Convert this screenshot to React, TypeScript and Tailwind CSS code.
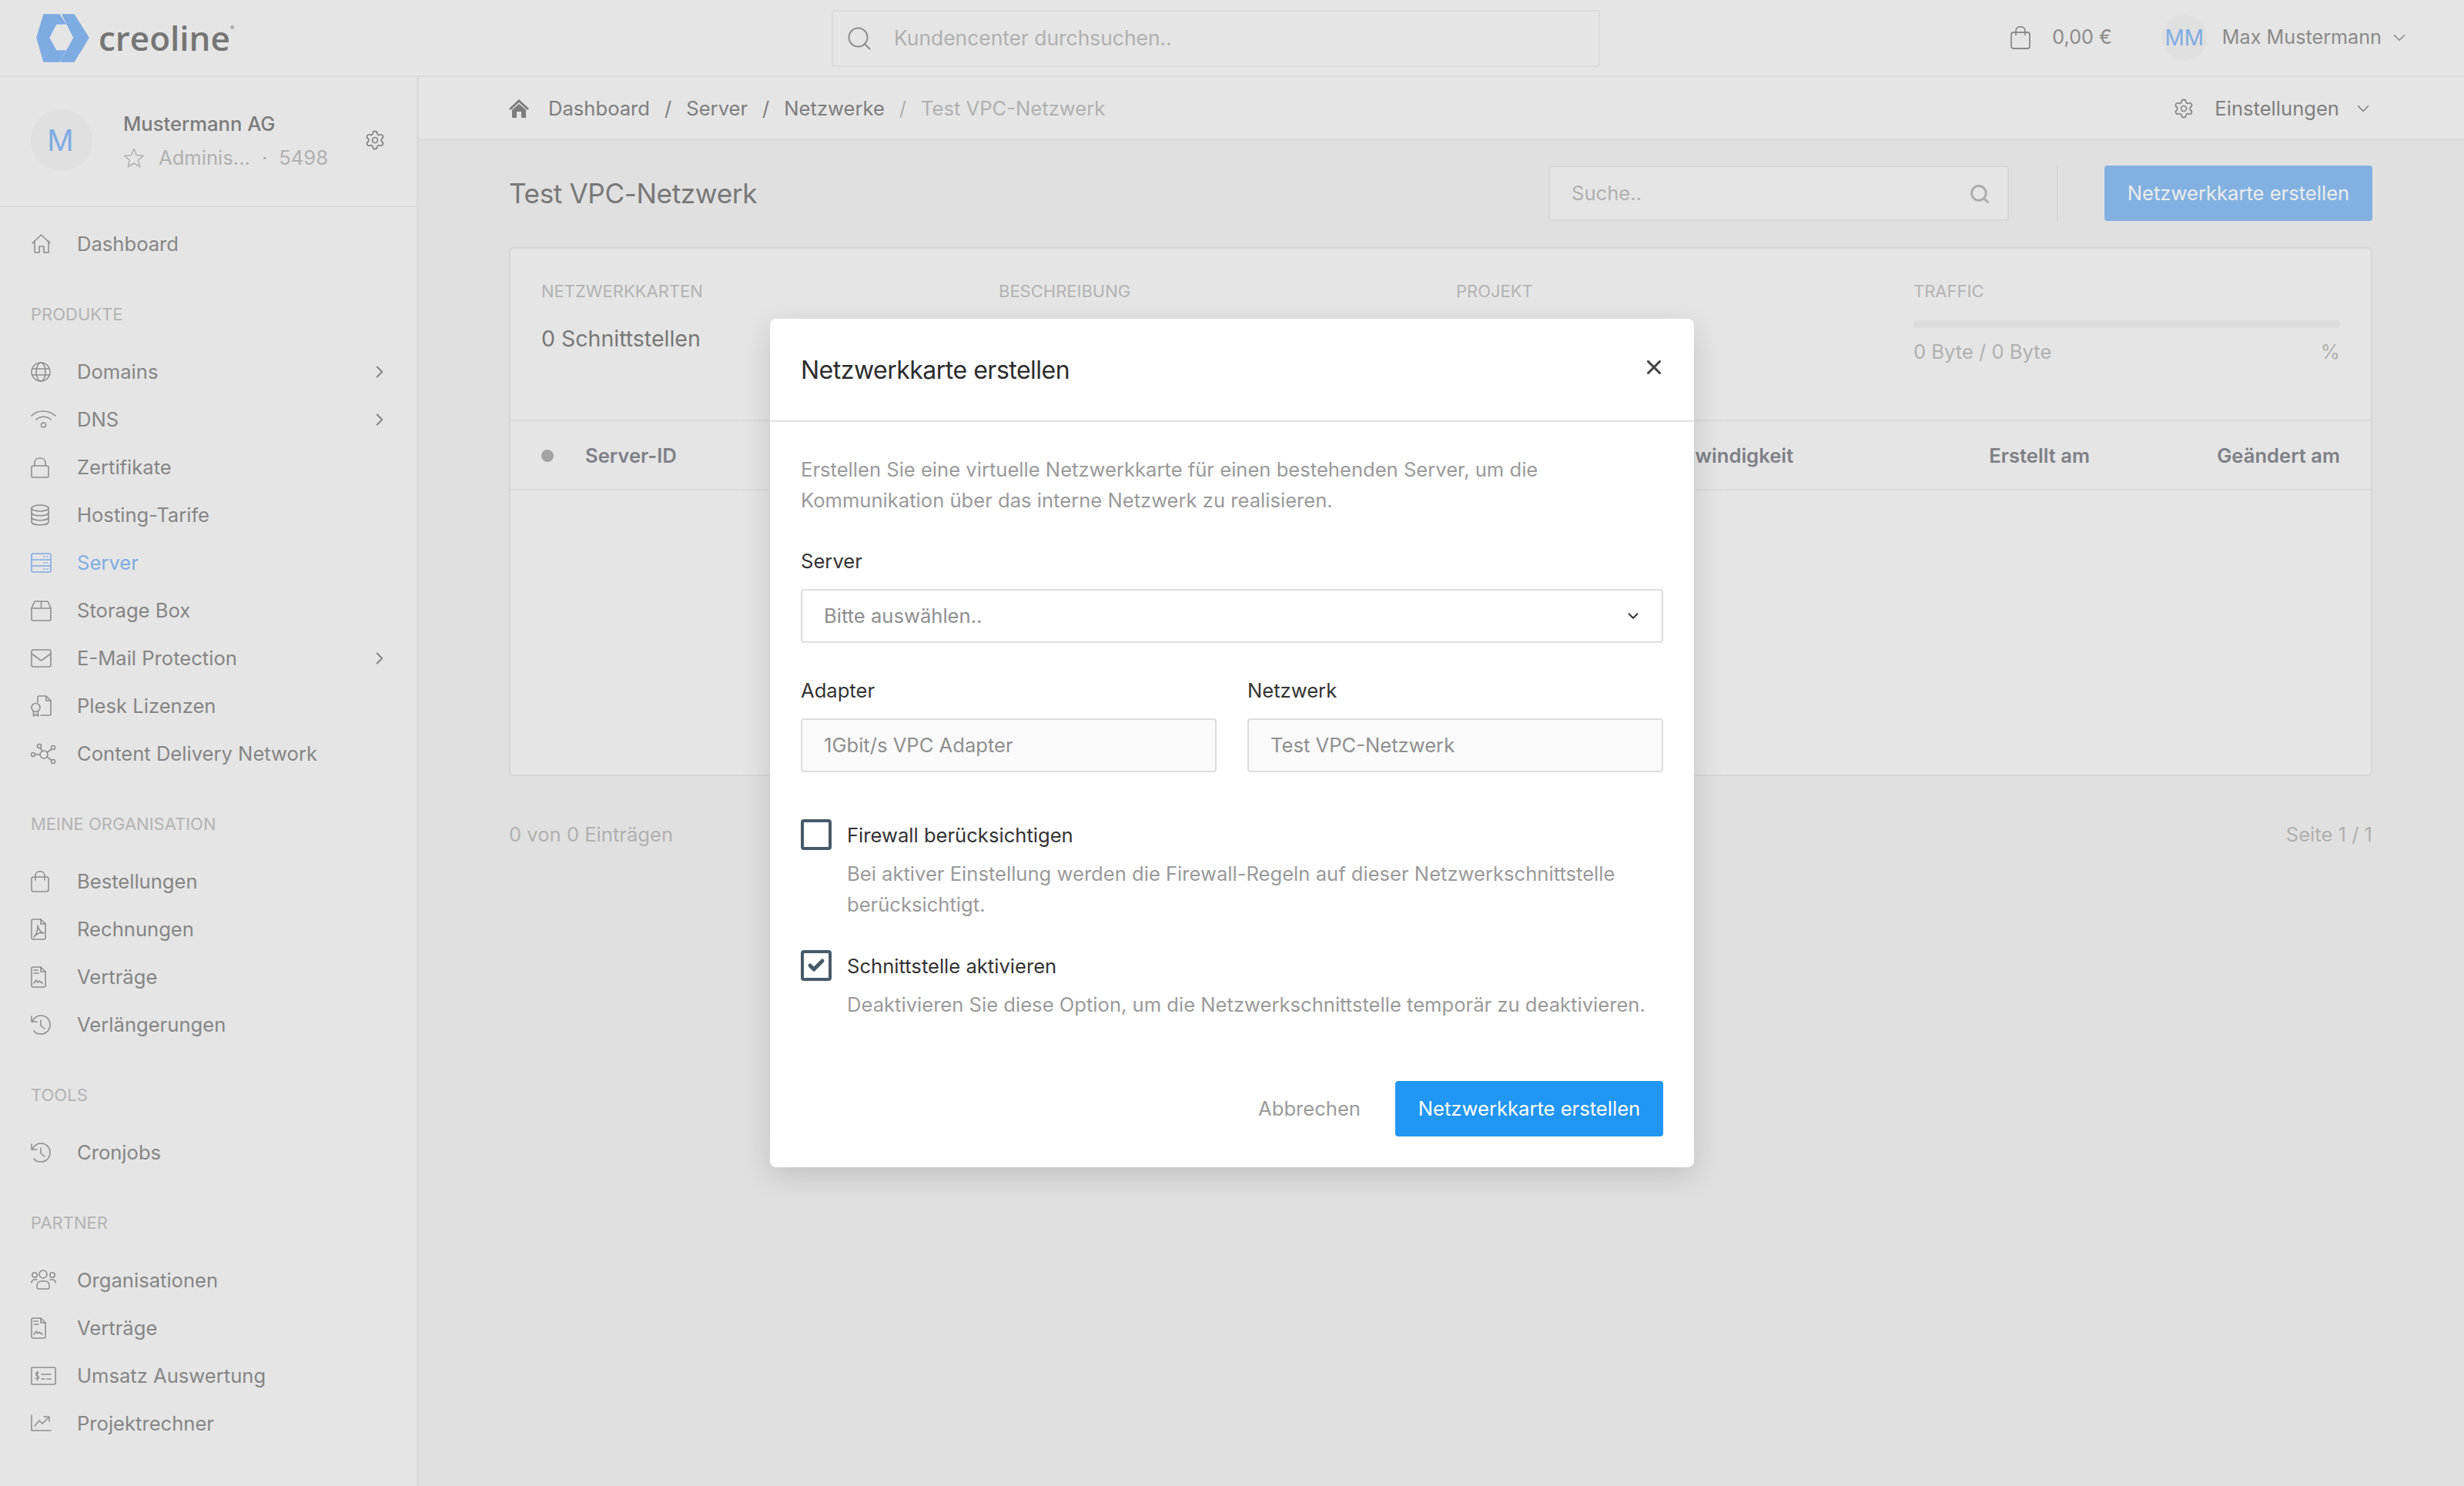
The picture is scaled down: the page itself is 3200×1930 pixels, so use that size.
import React from "react";
import { ChevronDown, ChevronRight, Search, Settings, X, Check } from "lucide-react";

type IconProps = { children: React.ReactNode };

// all sidebar icons share one box, drawn in full pixels
function NavIcon({ children }: IconProps) {
  return (
    <svg className="w-[34px] h-[28px] shrink-0" viewBox="0 0 34 28" fill="none" stroke="currentColor" strokeWidth={1.6} strokeLinecap="round" strokeLinejoin="round">
      {children}
    </svg>
  );
}

const icons: Record<string, React.ReactNode> = {
  home: (
    <>
      <path d="M2 13 L13.5 2 L25 13" />
      <path d="M5 10 V25 H11 V17 H17 V25 H23 V10" />
    </>
  ),
  globe: (
    <>
      <circle cx="13" cy="14" r="12" />
      <ellipse cx="13" cy="14" rx="6" ry="12" />
      <path d="M2 10 H24 M2 18 H24" />
    </>
  ),
  wifi: (
    <>
      <path d="M1 9 C9 1 23 1 32 9" />
      <path d="M7 14 C12 9 21 9 26 14" />
      <circle cx="16.5" cy="21" r="3" />
    </>
  ),
  lock: (
    <>
      <rect x="1" y="12" width="22" height="15" rx="2" />
      <path d="M5 12 V8 C5 0 19 0 19 8 V12" />
    </>
  ),
  database: (
    <>
      <ellipse cx="12" cy="5" rx="11" ry="4" />
      <path d="M1 5 V23 C1 28 23 28 23 23 V5" />
      <path d="M1 11 C1 16 23 16 23 11 M1 17 C1 22 23 22 23 17" />
    </>
  ),
  server: (
    <>
      <rect x="1" y="2" width="25" height="24" rx="2" />
      <path d="M1 10 H26 M1 18 H26" />
      <path d="M17 6 H18 M21 6 H22 M17 14 H18 M21 14 H22 M17 22 H18 M21 22 H22" />
    </>
  ),
  box: (
    <>
      <path d="M1 11 L5 2 H22 L26 11 V25 C26 26 25 27 24 27 H3 C2 27 1 26 1 25 Z" />
      <path d="M1 11 H26 M13.5 2 V11" />
    </>
  ),
  mail: (
    <>
      <rect x="1" y="3" width="25" height="22" rx="2" />
      <path d="M1 8 L13.5 17 L26 8" />
    </>
  ),
  plesk: (
    <>
      <path d="M9 9 V3 C9 2 10 1 11 1 H20 L26 7 V24 C26 25 25 26 24 26 H13" />
      <path d="M20 1 V7 H26" />
      <circle cx="6.5" cy="16" r="5.5" />
      <path d="M3.5 21 V27 L6.5 25 L9.5 27 V21" />
    </>
  ),
  network: (
    <>
      <circle cx="17" cy="15" r="5" />
      <circle cx="11" cy="4" r="2.5" />
      <circle cx="29" cy="6" r="2.5" />
      <circle cx="29" cy="24" r="2.5" />
      <circle cx="3" cy="15" r="2.5" />
      <path d="M12.5 6.5 L15 10.5 M27 8 L21 12 M27 22.5 L21 18 M6 15 H12" />
    </>
  ),
  bag: (
    <>
      <rect x="1" y="8" width="22" height="19" rx="2.5" />
      <path d="M6 12 V6 C6 -1 18 -1 18 6 V12" />
    </>
  ),
  pdf: (
    <>
      <path d="M1 3 C1 2 2 1 3 1 H13 L19 7 V25 C19 26 18 27 17 27 H3 C2 27 1 26 1 25 Z" />
      <path d="M13 1 V7 H19" />
      <path d="M9 9 C10 14 12 18 17 19 C12 18 7 20 4 24 C7 21 9 15 9 9" />
    </>
  ),
  contract: (
    <>
      <path d="M1 3 C1 2 2 1 3 1 H13 L19 7 V25 C19 26 18 27 17 27 H3 C2 27 1 26 1 25 Z" />
      <path d="M13 1 V7 H19 M4 5 H9 M4 9 H10" />
      <path d="M4 22 L7 18 L9 21 L11 19 L15 22" />
    </>
  ),
  history: (
    <>
      <path d="M1 3 V10 H8" />
      <path d="M2 10 C4 5 8 2 13 2 C20 2 25 7 25 14 C25 21 20 26 13 26 C9 26 6 25 4 22" />
      <path d="M13 8 V15 L18 19" />
    </>
  ),
  users: (
    <>
      <circle cx="16" cy="6" r="5" />
      <circle cx="5" cy="7" r="3.2" />
      <circle cx="28" cy="7" r="3.2" />
      <path d="M1 17 C1 14 3 13 5 13 H8 M32 17 C32 14 30 13 28 13 H25" />
      <path d="M8 21 C8 17 11 15 13 15 H19 C22 15 24 17 24 21 V23 C24 24 23 25 22 25 H10 C9 25 8 24 8 23 Z" />
    </>
  ),
  money: (
    <>
      <rect x="1" y="3" width="31" height="22" rx="1" />
      <path d="M14 12 H26 M14 18 H18 M21 18 H26" />
      <path d="M10 10 C7 9 6 11 7 12.5 C8 14 11 14 10.5 16.5 C10 18 8 18 6.5 17 M8.5 8 V20" strokeWidth={1.4} />
    </>
  ),
  chart: (
    <>
      <path d="M1 3 V23 H26" />
      <path d="M5 17 L11 10 L15 14 L23 6" />
      <path d="M17 5 H24 V11" />
    </>
  ),
};

type NavEntry = { icon: string; label: string; arrow?: boolean; active?: boolean };

const sections: { title: string; items: NavEntry[] }[] = [
  {
    title: "Produkte",
    items: [
      { icon: "globe", label: "Domains", arrow: true },
      { icon: "wifi", label: "DNS", arrow: true },
      { icon: "lock", label: "Zertifikate" },
      { icon: "database", label: "Hosting-Tarife" },
      { icon: "server", label: "Server", active: true },
      { icon: "box", label: "Storage Box" },
      { icon: "mail", label: "E-Mail Protection", arrow: true },
      { icon: "plesk", label: "Plesk Lizenzen" },
      { icon: "network", label: "Content Delivery Network" },
    ],
  },
  {
    title: "Meine Organisation",
    items: [
      { icon: "bag", label: "Bestellungen" },
      { icon: "pdf", label: "Rechnungen" },
      { icon: "contract", label: "Verträge" },
      { icon: "history", label: "Verlängerungen" },
    ],
  },
  { title: "Tools", items: [{ icon: "history", label: "Cronjobs" }] },
  {
    title: "Partner",
    items: [
      { icon: "users", label: "Organisationen" },
      { icon: "contract", label: "Verträge" },
      { icon: "money", label: "Umsatz Auswertung" },
      { icon: "chart", label: "Projektrechner" },
    ],
  },
];

function NavItem({ icon, label, arrow, active }: NavEntry) {
  return (
    <div className={`flex items-center h-[62px] pt-[2px] pl-[40px] pr-[40px] text-[25.6px] ${active ? "text-[#7fabe3]" : "text-[#858585]"}`}>
      <span className={`w-[60px] flex items-center ${active ? "" : "text-[#8f8f8f]"}`}>
        <NavIcon>{icons[icon]}</NavIcon>
      </span>
      <span className="flex-1">{label}</span>
      {arrow && <ChevronRight className="w-[26px] h-[26px] text-[#838383] mr-[-5px]" strokeWidth={1.8} />}
    </div>
  );
}

function Header() {
  return (
    <header className="h-[100px] shrink-0 flex items-center bg-[#e5e5e5] border-b-2 border-[#dbdbdb]">
      <div className="w-[1080px] shrink-0 flex items-center pl-[47px]">
        <svg className="w-[69px] h-[63px]" viewBox="0 0 69 63" fill="#7fabe3" stroke="#7fabe3" strokeWidth={1.5} strokeLinejoin="round">
          <polygon points="10,1 30,1 38,13 26,13 16.5,31 26,48 38,48 30,62 10,62 1,31" />
          <polygon points="34,1 49,1 68,31 49,62 32,62 49,31" />
        </svg>
        <span className="ml-[12px] font-[family-name:'Open_Sans',sans-serif] font-semibold text-[44px] leading-none text-[#757575]">
          creoline
        </span>
        <span className="text-[8px] text-[#757575] self-start mt-[12px]">®</span>
      </div>
      <div className="w-[998px] h-[74px] mt-[2px] flex items-center border-2 border-[#dbdbdb] rounded-[4px] pl-[16px] text-[26.4px] text-[#b0b0b0]">
        <Search className="w-[36px] h-[36px] text-[#8a8a8a]" strokeWidth={1.3} />
        <span className="ml-[27px]">Kundencenter durchsuchen..</span>
      </div>
      <div className="flex-1 flex items-center justify-end pr-[71px] text-[25.2px] text-[#8a8a8a]">
        <svg className="w-[28px] h-[32px]" viewBox="0 0 28 32" fill="none" stroke="currentColor" strokeWidth={1.8}>
          <rect x="2" y="9" width="24" height="21" rx="3" />
          <path d="M8 13 V7 C8 0 20 0 20 7 V13" />
        </svg>
        <span className="ml-[27px]">0,00 €</span>
        <span className="ml-[65px] w-[58px] h-[60px] rounded-full bg-[#e0e0e0] flex items-center justify-center text-[28px] text-[#7fabe3]">MM</span>
        <span className="ml-[20px]">Max Mustermann</span>
        <ChevronDown className="ml-[10px] w-[26px] h-[26px]" strokeWidth={1.5} />
      </div>
    </header>
  );
}

function Sidebar() {
  return (
    <aside className="w-[544px] shrink-0 bg-[#e5e5e5] border-r-[3px] border-[#dbdbdb]">
      <div className="h-[169px] flex items-start pl-[40px] pt-[42px] border-b-2 border-[#dbdbdb]">
        <div className="w-[80px] h-[80px] rounded-full bg-[#e0e0e0] flex items-center justify-center pr-[3px] text-[38px] text-[#7fabe3]">M</div>
        <div className="ml-[40px] flex-1">
          <div className="text-[25.6px] leading-[38px] font-medium text-[#7c7c7c]">Mustermann AG</div>
          <div className="mt-[6px] flex items-center text-[25.6px] leading-[38px] text-[#b0b0b0]">
            <svg className="w-[28px] h-[28px]" viewBox="0 0 24 24" fill="none" stroke="currentColor" strokeWidth={1.3} strokeLinejoin="round">
              <path d="M12 2 L15 9 L22.5 9.6 L16.8 14.6 L18.6 22 L12 18 L5.4 22 L7.2 14.6 L1.5 9.6 L9 9 Z" />
            </svg>
            <span className="ml-[18px]">Adminis...</span>
            <span className="ml-[15px]">·</span>
            <span className="ml-[15px]">5498</span>
          </div>
        </div>
        <Settings className="w-[28px] h-[28px] mt-[26px] mr-[40px] text-[#808080]" strokeWidth={1.4} />
      </div>
      <nav className="pt-[16px]">
        <NavItem icon="home" label="Dashboard" />
        {sections.map((s) => (
          <div key={s.title}>
            <div className="mt-[46px] mb-[28px] pl-[40px] h-[30px] leading-[30px] text-[22px] uppercase text-[#b3b3b3]">{s.title}</div>
            {s.items.map((item) => (
              <NavItem key={item.label} {...item} />
            ))}
          </div>
        ))}
      </nav>
    </aside>
  );
}

function Breadcrumb() {
  return (
    <div className="h-[82px] shrink-0 flex items-center justify-between bg-[#e5e5e5] border-b-2 border-[#dbdbdb] pt-[2px] pl-[117px] pr-[118px] text-[25.6px]">
      <div className="flex items-center text-[#7d7d7d]">
        <svg className="w-[26px] h-[24px] mr-[25px]" viewBox="0 0 26 24" fill="currentColor">
          <path d="M13 0 L26 12 L24 14 L13 4 L2 14 L0 12 Z" />
          <path d="M4 13.5 L13 6 L22 13.5 V24 H16 V16 H10 V24 H4 Z" />
        </svg>
        <span>Dashboard</span>
        <span className="mx-[19px]">/</span>
        <span>Server</span>
        <span className="mx-[19px]">/</span>
        <span>Netzwerke</span>
        <span className="mx-[19px] text-[#b0b0b0]">/</span>
        <span className="text-[#b0b0b0]">Test VPC-Netzwerk</span>
      </div>
      <div className="flex items-center text-[#808080]">
        <Settings className="w-[28px] h-[28px]" strokeWidth={1.4} />
        <span className="ml-[26px]">Einstellungen</span>
        <ChevronDown className="ml-[18px] w-[26px] h-[26px]" strokeWidth={1.5} />
      </div>
    </div>
  );
}

function InfoColumn({ label, children }: { label: string; children?: React.ReactNode }) {
  return (
    <div>
      <div className="h-[30px] leading-[30px] text-[22px] uppercase text-[#b3b3b3]">{label}</div>
      {children}
    </div>
  );
}

function Content() {
  return (
    <main className="flex-1 pt-[33px] pl-[117px] pr-[119px]">
      <div className="h-[72px] flex items-center">
        <h1 className="flex-1 text-[35.2px] text-[#787878] tracking-[-0.4px]">Test VPC-Netzwerk</h1>
        <div className="w-[598px] h-[72px] flex items-center justify-between border-2 border-[#d8d8d8] bg-[#e5e5e5] rounded-[4px] pt-[1px] pl-[28px] pr-[22px] text-[25.6px] text-[#b0b0b0]">
          <span>Suche..</span>
          <Search className="w-[28px] h-[28px] text-[#ababab]" strokeWidth={2.5} />
        </div>
        <div className="w-[2px] h-[72px] bg-[#d8d8d8] ml-[62px] mr-[60px]" />
        <div className="w-[348px] h-[72px] pt-[1px] flex items-center justify-center rounded-[4px] bg-[#82b1e1] text-[25.6px] text-[#ececec]">Netzwerkkarte erstellen</div>
      </div>

      <div className="mt-[34px] h-[687px] rounded-[6px] border-2 border-[#d7d7d7] bg-[#e5e5e5]">
        <div className="h-[224px] border-b-2 border-[#dbdbdb] grid grid-cols-4 gap-[40px] px-[40px] pt-[40px]">
          <InfoColumn label="Netzwerkkarten">
            <div className="mt-[27px] leading-[40px] text-[28.5px] text-[#777]">0 Schnittstellen</div>
          </InfoColumn>
          <InfoColumn label="Beschreibung" />
          <InfoColumn label="Projekt" />
          <InfoColumn label="Traffic">
            <div className="mt-[23px] h-[10px] rounded-full bg-[#dcdcdc]" />
            <div className="mt-[13px] flex justify-between leading-[36px] text-[25.6px] text-[#b0b0b0]">
              <span>0 Byte / 0 Byte</span>
              <span>%</span>
            </div>
          </InfoColumn>
        </div>
        <div className="h-[90px] pt-[2px] border-b-2 border-[#dbdbdb] flex items-center px-[40px] text-[25.6px] font-semibold text-[#7e8087]">
          <span className="w-[16px] h-[16px] rounded-full bg-[#a3a3a3]" />
          <span className="ml-[41px]">Server-ID</span>
          <span className="ml-auto">Geschwindigkeit</span>
          <span className="w-[385px] text-right">Erstellt am</span>
          <span className="w-[325px] text-right">Geändert am</span>
        </div>
      </div>

      <div className="mt-[57px] flex justify-between text-[25.6px] text-[#b0b0b0]">
        <span>0 von 0 Einträgen</span>
        <span>Seite 1 / 1</span>
      </div>
    </main>
  );
}

function Field({ label, value, disabled, select }: { label: string; value: string; disabled?: boolean; select?: boolean }) {
  return (
    <div className="flex-1">
      <div className="text-[25.6px] leading-[36px] text-[#333]">{label}</div>
      <div className={`mt-[18px] h-[70px] flex items-center justify-between border-2 border-[#dedede] rounded-[4px] pl-[28px] pr-[26px] text-[25.6px] text-[#8f8f8f] ${disabled ? "bg-[#fafafa]" : "bg-white"}`}>
        <span>{value}</span>
        {select && <ChevronDown className="w-[22px] h-[22px] text-[#333]" strokeWidth={2.2} />}
      </div>
    </div>
  );
}

function Option({ label, hint, checked }: { label: string; hint: string; checked?: boolean }) {
  return (
    <div className="flex">
      <div className="w-[40px] h-[40px] shrink-0 rounded-[4px] border-[4px] border-[#475a6a] flex items-center justify-center">
        {checked && <Check className="w-[24px] h-[24px] text-[#475a6a]" strokeWidth={5} />}
      </div>
      <div className="ml-[20px] flex-1">
        <div className="h-[40px] leading-[40px] mt-[1px] text-[25.6px] text-[#333]">{label}</div>
        <div className="mt-[10px] text-[25.6px] leading-[40px] text-[#9a9a9a]">{hint}</div>
      </div>
    </div>
  );
}

function Modal() {
  return (
    <div className="absolute top-[414px] left-[1000px] w-[1200px] h-[1102px] rounded-[8px] bg-white shadow-[0_12px_40px_rgba(0,0,0,0.14)]">
      <div className="h-[134px] pt-[2px] flex items-center justify-between border-b-2 border-[#e2e2e2] pl-[40px] pr-[37px]">
        <h2 className="text-[32px] text-[#2d2d2d] tracking-[-0.5px]">Netzwerkkarte erstellen</h2>
        <X className="w-[30px] h-[30px] mb-[8px] text-[#444]" strokeWidth={2.5} />
      </div>
      <div className="px-[40px] pt-[42px]">
        <p className="text-[25.6px] leading-[40px] text-[#9a9a9a]">
          Erstellen Sie eine virtuelle Netzwerkkarte für einen bestehenden Server, um die
          <br />
          Kommunikation über das interne Netzwerk zu realisieren.
        </p>
        <div className="mt-[41px]">
          <Field label="Server" value="Bitte auswählen.." select />
        </div>
        <div className="mt-[44px] flex gap-[40px]">
          <Field label="Adapter" value="1Gbit/s VPC Adapter" disabled />
          <Field label="Netzwerk" value="Test VPC-Netzwerk" disabled />
        </div>
        <div className="mt-[61px] flex flex-col gap-[39px]">
          <Option label="Firewall berücksichtigen" hint="Bei aktiver Einstellung werden die Firewall-Regeln auf dieser Netzwerkschnittstelle berücksichtigt." />
          <Option label="Schnittstelle aktivieren" hint="Deaktivieren Sie diese Option, um die Netzwerkschnittstelle temporär zu deaktivieren." checked />
        </div>
        <div className="mt-[79px] flex items-center justify-end text-[25.6px]">
          <span className="text-[#9a9a9a] mr-[45px]">Abbrechen</span>
          <div className="w-[348px] h-[72px] pt-[1px] flex items-center justify-center rounded-[4px] bg-[#2196f3] text-white">Netzwerkkarte erstellen</div>
        </div>
      </div>
    </div>
  );
}

export default function App() {
  return (
    <div className="relative w-[3200px] h-[1930px] overflow-hidden flex flex-col bg-[#e0e0e0] font-[family-name:Inter,sans-serif]">
      <Header />
      <div className="flex-1 flex min-h-0">
        <Sidebar />
        <div className="flex-1 flex flex-col min-w-0">
          <Breadcrumb />
          <Content />
        </div>
      </div>
      <Modal />
    </div>
  );
}
